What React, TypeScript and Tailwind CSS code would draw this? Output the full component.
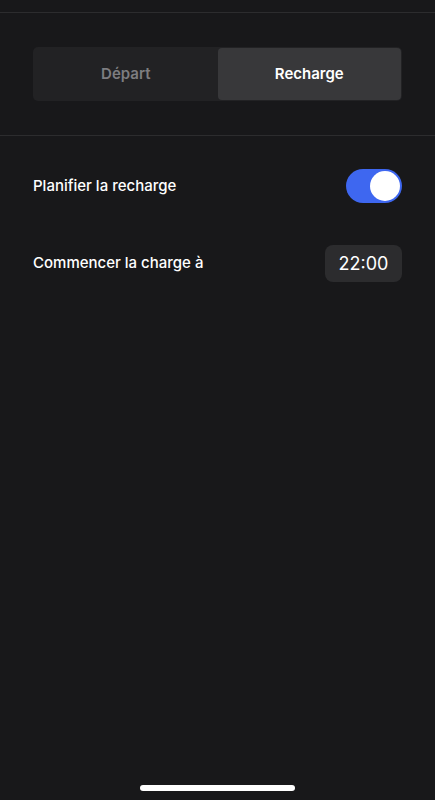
import { useState } from "react";

const App = () => {
  const [tab, setTab] = useState<"depart" | "recharge">("recharge");
  const [scheduled, setScheduled] = useState(true);

  return (
    <div
      className="relative flex h-[800px] w-[435px] flex-col bg-[#18181a] text-white"
      style={{ fontFamily: "Inter, 'Noto Sans', sans-serif" }}
    >
      <div className="mt-3 h-px bg-[#2c2c2e]" />

      {/* Segmented control */}
      <div className="px-[33px] pt-[34px] pb-[34px]">
        <div className="flex h-[54px] rounded-[5px] bg-[#222224] p-px">
          <button
            className={`flex-1 rounded-[4px] text-[15px] font-semibold ${
              tab === "depart" ? "bg-[#38383a] text-white" : "text-[#7d7d80]"
            }`}
            onClick={() => setTab("depart")}
          >
            Départ
          </button>
          <button
            className={`flex-1 rounded-[4px] text-[15px] font-semibold ${
              tab === "recharge" ? "bg-[#38383a] text-white" : "text-[#7d7d80]"
            }`}
            onClick={() => setTab("recharge")}
          >
            Recharge
          </button>
        </div>
      </div>

      <div className="h-px bg-[#2c2c2e]" />

      <div className="px-[33px]">
        <div className="flex h-[34px] items-center justify-between mt-[33px]">
          <span className="text-[15px] font-medium">Planifier la recharge</span>
          <button
            className={`flex h-[34px] w-[56px] items-center rounded-full px-[2px] ${
              scheduled ? "justify-end bg-[#3e67f0]" : "justify-start bg-[#3a3a3c]"
            }`}
            onClick={() => setScheduled(!scheduled)}
          >
            <span className="h-[30px] w-[30px] rounded-full bg-white" />
          </button>
        </div>

        <div className="mt-[42px] flex h-[37px] items-center justify-between">
          <span className="text-[15px] font-medium">Commencer la charge à</span>
          <div className="flex h-[37px] w-[77px] items-center justify-center rounded-[8px] bg-[#2c2c2e] text-[18px]">
            22:00
          </div>
        </div>
      </div>

      {/* Home indicator */}
      <div className="absolute bottom-[9px] left-[140px] h-[6px] w-[155px] rounded-full bg-white" />
    </div>
  );
};

export default App;
